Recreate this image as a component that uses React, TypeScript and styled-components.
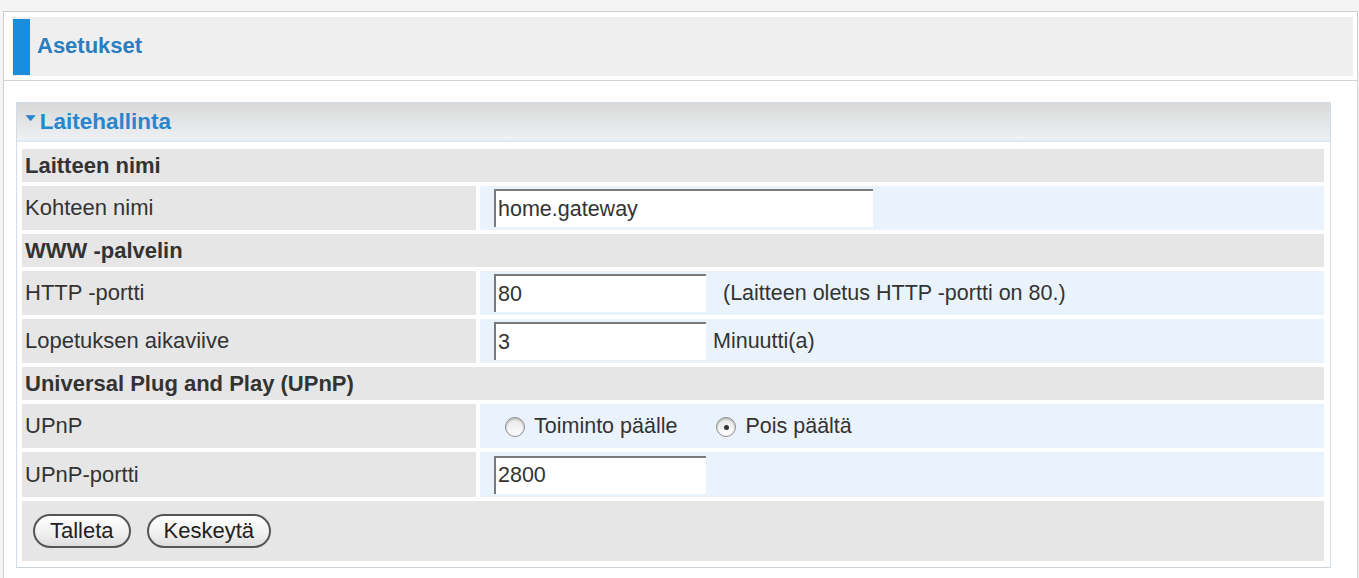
import React from "react";
import styled, { createGlobalStyle } from "styled-components";

const GlobalStyle = createGlobalStyle`
  html, body {
    margin: 0;
    padding: 0;
    background: #f4f4f4;
    font-family: "Liberation Sans", Arial, Helvetica, sans-serif;
    color: #333;
  }
  * { box-sizing: border-box; }
`;

const Frame = styled.div`
  margin: 11px 1px 0 3px;
  border: 1px solid #d0d0d0;
  border-bottom: none;
  background: #fff;
  height: 567px;
`;

const TitleArea = styled.div`
  padding: 5px 4px 4px 8px;
  border-bottom: 1px solid #d2d2d2;
`;

const TitleBox = styled.div`
  display: flex;
  align-items: center;
  height: 59px;
  background: #efefef;
  padding: 2px 0 1px 1px;
`;

const BlueMark = styled.span`
  width: 17px;
  align-self: stretch;
  background: #1a8ddb;
`;

const Title = styled.h1`
  margin: 0 0 0 7px;
  font-size: 22px;
  font-weight: bold;
  color: #2a7dbf;
  position: relative;
  top: -1px;
`;

const Panel = styled.div`
  margin: 21px 26px 0 12px;
  border: 1px solid #d3dde7;
  border-bottom-color: #c9d3dc;
  background: #fff;
`;

const PanelHeader = styled.div`
  height: 39px;
  display: flex;
  align-items: center;
  padding-left: 5px;
  background: linear-gradient(#d9d9d9, #e7e9eb 70%, #eef2f6);
  border-bottom: 2px solid #dde9f4;
  font-size: 22.5px;
  font-weight: bold;
  color: #2a86cc;
`;

const Caret = styled.span`
  font-size: 17px;
  margin-right: 1px;
  position: relative;
  top: -4px;
  transform: scaleY(0.6);
`;

const Body = styled.div`
  display: flex;
  flex-direction: column;
  gap: 4px;
  padding: 7px 6px 6px 5px;
`;

const Section = styled.div`
  height: 33px;
  display: flex;
  align-items: center;
  padding-left: 3px;
  background: #e6e6e6;
  font-size: 22px;
  font-weight: bold;
  color: #333;
`;

const FieldRow = styled.div<{ $tall?: boolean }>`
  display: grid;
  grid-template-columns: 454px 1fr;
  column-gap: 4px;
  height: ${(p) => (p.$tall ? 45 : 44)}px;
`;

const Label = styled.div`
  display: flex;
  align-items: center;
  padding-left: 3px;
  background: #e6e6e6;
  font-size: 22px;
  color: #333;
`;

const Value = styled.div`
  display: flex;
  align-items: center;
  padding-left: 14px;
  background: #eaf3fc;
  font-size: 21.5px;
  color: #333;
`;

const TextInput = styled.input<{ $w: number }>`
  width: ${(p) => p.$w}px;
  height: 38px;
  padding: 0 2px;
  border: none;
  border-top: 2px solid #7a7a7a;
  border-left: 2px solid #7a7a7a;
  background: #fff;
  font-family: "Liberation Sans", Arial, sans-serif;
  font-size: 21.5px;
  color: #333;
  outline: none;
`;

const Hint = styled.span<{ $gap: number }>`
  margin-left: ${(p) => p.$gap}px;
`;

const RadioLabel = styled.label<{ $gap?: number }>`
  display: inline-flex;
  align-items: center;
  margin-left: ${(p) => p.$gap ?? 0}px;
  cursor: pointer;
`;

const RadioDot = styled.span<{ $on?: boolean }>`
  width: 20px;
  height: 20px;
  margin-right: 9px;
  border-radius: 50%;
  border: 1px solid #8c8c8c;
  background: linear-gradient(#e6e6e6, #ffffff);
  box-shadow: inset 0 1px 2px rgba(0, 0, 0, 0.25);
  display: flex;
  align-items: center;
  justify-content: center;
  position: relative;
  top: 1px;
  &::after {
    content: "";
    width: 5px;
    height: 5px;
    border-radius: 50%;
    background: ${(p) => (p.$on ? "#333" : "transparent")};
  }
`;

const ButtonRow = styled.div`
  height: 60px;
  display: flex;
  align-items: center;
  gap: 16px;
  padding-left: 11px;
  background: #e6e6e6;
`;

const Button = styled.button`
  height: 34px;
  padding: 0 15px;
  border: 2px solid #555;
  border-radius: 17px;
  background: linear-gradient(#ffffff, #f1f1f1 55%, #dedede);
  font-family: "Liberation Sans", Arial, sans-serif;
  font-size: 22px;
  color: #222;
  cursor: pointer;
`;

export default function App() {
  return (
    <>
      <GlobalStyle />
      <Frame>
        <TitleArea>
          <TitleBox>
            <BlueMark />
            <Title>Asetukset</Title>
          </TitleBox>
        </TitleArea>
        <Panel>
          <PanelHeader>
            <Caret>▼</Caret>Laitehallinta
          </PanelHeader>
          <Body>
            <Section>Laitteen nimi</Section>
            <FieldRow>
              <Label>Kohteen nimi</Label>
              <Value>
                <TextInput $w={379} defaultValue="home.gateway" />
              </Value>
            </FieldRow>
            <Section>WWW -palvelin</Section>
            <FieldRow>
              <Label>HTTP -portti</Label>
              <Value>
                <TextInput $w={212} defaultValue="80" />
                <Hint $gap={17}>(Laitteen oletus HTTP -portti on 80.)</Hint>
              </Value>
            </FieldRow>
            <FieldRow>
              <Label>Lopetuksen aikaviive</Label>
              <Value>
                <TextInput $w={212} defaultValue="3" />
                <Hint $gap={7}>Minuutti(a)</Hint>
              </Value>
            </FieldRow>
            <Section>Universal Plug and Play (UPnP)</Section>
            <FieldRow>
              <Label>UPnP</Label>
              <Value>
                <RadioLabel $gap={11}>
                  <RadioDot />
                  Toiminto päälle
                </RadioLabel>
                <RadioLabel $gap={39}>
                  <RadioDot $on />
                  Pois päältä
                </RadioLabel>
              </Value>
            </FieldRow>
            <FieldRow $tall>
              <Label>UPnP-portti</Label>
              <Value>
                <TextInput $w={212} defaultValue="2800" />
              </Value>
            </FieldRow>
            <ButtonRow>
              <Button>Talleta</Button>
              <Button>Keskeytä</Button>
            </ButtonRow>
          </Body>
        </Panel>
      </Frame>
    </>
  );
}
